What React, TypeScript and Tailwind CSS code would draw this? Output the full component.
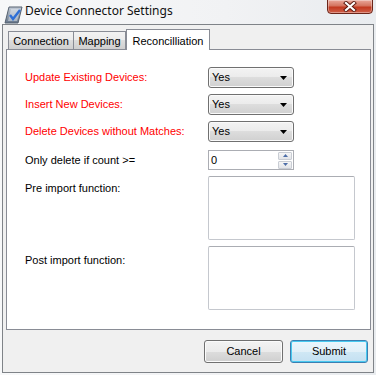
import React from "react";

function Combo() {
  return (
    <div className="w-[86px] h-[21px] rounded-[3px] border border-[#707070] bg-[linear-gradient(#f3f3f3,#ebebeb_50%,#dddddd_50%,#d0d0d0)] flex items-center pl-[3px] pr-[6px] text-[11px] text-black shadow-[inset_0_0_0_1px_#fafafa]">
      <span>Yes</span>
      <svg className="ml-auto" width="7" height="4" viewBox="0 0 7 4">
        <path d="M0 0H7L3.5 4Z" fill="#000" />
      </svg>
    </div>
  );
}

function Numeric() {
  return (
    <div className="w-[86px] h-[20px] border border-[#abadb3] bg-white flex items-center pl-[2px] pr-[1px] text-[11px]">
      <span>0</span>
      <div className="ml-auto flex flex-col gap-[1px]">
        <div className="w-[14px] h-[8px] border border-[#c9cdd4] rounded-[1px] bg-[linear-gradient(#f6f6f6,#e2e4e8)] flex items-center justify-center">
          <svg width="5" height="3" viewBox="0 0 5 3">
            <path d="M0 3H5L2.5 0Z" fill="#4d6ea8" />
          </svg>
        </div>
        <div className="w-[14px] h-[8px] border border-[#c9cdd4] rounded-[1px] bg-[linear-gradient(#f6f6f6,#e2e4e8)] flex items-center justify-center">
          <svg width="5" height="3" viewBox="0 0 5 3">
            <path d="M0 0H5L2.5 3Z" fill="#4d6ea8" />
          </svg>
        </div>
      </div>
    </div>
  );
}

function TextArea() {
  return (
    <div className="w-[147px] h-[64px] rounded-[2px] border border-[#c5c8ce] border-t-[#abadb3] bg-white" />
  );
}

export default function App() {
  return (
    <div className="w-[376px] h-[375px] overflow-hidden bg-[linear-gradient(to_right,#f7f8f9,#f1f2f4_60%,#e9ecef)] font-['Liberation_Sans',Arial,sans-serif] text-black">
      {/* Title bar */}
      <div className="h-[24px] flex items-start">
        <svg className="ml-[4px] mt-[6px]" width="19" height="18" viewBox="0 0 19 18">
          <defs>
            <linearGradient id="g1" x1="0" y1="0" x2="0" y2="1">
              <stop offset="0" stopColor="#c3ccd8" />
              <stop offset="1" stopColor="#66768a" />
            </linearGradient>
          </defs>
          <path d="M5 1H18L14 17H1Z" fill="url(#g1)" stroke="#55616f" strokeWidth="1" />
          <path d="M7 3H16L13 15H4Z" fill="#e6ecf2" opacity="0.5" />
          <path d="M6 9L9 13L16 4" fill="none" stroke="#2e6fd6" strokeWidth="2.4" />
        </svg>
        <span className="ml-[2px] mt-[3px] text-[12px] leading-[16px] font-['Noto_Sans',sans-serif] text-[#111]">
          Device Connector Settings
        </span>
        <div className="ml-auto mr-[3px] w-[46px] h-[15px] -mt-px rounded-b-[4px] border border-[#6b2519] bg-[linear-gradient(#e9a89a,#d4735e_45%,#c2391f_55%,#d0604a)] flex items-center justify-center shadow-[inset_0_0_0_1px_rgba(255,255,255,0.35)]">
          <svg width="14" height="11" viewBox="0 0 14 11">
            <path d="M3 2L11 9M11 2L3 9" stroke="#5a1a10" strokeWidth="4" strokeLinecap="square" />
            <path d="M3 2L11 9M11 2L3 9" stroke="#ffffff" strokeWidth="2.2" strokeLinecap="square" />
          </svg>
        </div>
      </div>

      {/* Client area */}
      <div className="ml-[2px] w-[372px] h-[349px] border border-[#7f8388] bg-[#f0f0f0] flex flex-col">
        {/* Tab strip */}
        <div className="mt-[4px] ml-[5px] h-[20px] flex items-end text-[11px]">
          <div className="w-[66px] h-[18px] border border-b-0 border-[#898c95] bg-[linear-gradient(#f2f2f2,#ebebeb_50%,#dddddd_50%,#cfcfcf)] flex items-center justify-center pt-[1px]">
            Connection
          </div>
          <div className="w-[52px] h-[18px] border border-l-0 border-b-0 border-[#898c95] bg-[linear-gradient(#f2f2f2,#ebebeb_50%,#dddddd_50%,#cfcfcf)] flex items-center justify-center pt-[1px]">
            Mapping
          </div>
          <div className="relative z-10 w-[84px] h-[21px] -mb-px border border-b-0 border-[#898c95] bg-white flex items-start justify-center pt-[3px]">
            Reconcilliation
          </div>
        </div>

        {/* Tab panel */}
        <div className="ml-[3px] w-[365px] h-[281px] border border-[#898c95] bg-white pt-[17px] pl-[18px] text-[11px]">
          <div className="grid grid-cols-[183px_auto] gap-y-[6px]">
            <div className="h-[21px] flex items-center text-[#ff0000]">Update Existing Devices:</div>
            <Combo />
            <div className="h-[21px] flex items-center text-[#ff0000]">Insert New Devices:</div>
            <Combo />
            <div className="h-[21px] flex items-center text-[#ff0000]">Delete Devices without Matches:</div>
            <Combo />
            <div className="h-[20px] mt-[2px] flex items-center">Only delete if count &gt;=</div>
            <div className="mt-[2px]">
              <Numeric />
            </div>
            <div className="pt-[4px]">Pre import function:</div>
            <TextArea />
            <div className="pt-[6px]">Post import function:</div>
            <TextArea />
          </div>
        </div>

        {/* Buttons */}
        <div className="mt-[10px] mr-[5px] flex justify-end gap-[7px] text-[11px]">
          <div className="w-[79px] h-[23px] rounded-[3px] border border-[#707070] bg-[linear-gradient(#f3f3f3,#ebebeb_50%,#dddddd_50%,#cfcfcf)] shadow-[inset_0_0_0_1px_#fbfbfb] flex items-center justify-center">
            Cancel
          </div>
          <div className="w-[78px] h-[23px] rounded-[3px] border border-[#3c7fb1] bg-[linear-gradient(#eaf6fd,#e2f0f8_50%,#d0e8f5_50%,#c4e0f1)] shadow-[inset_0_0_0_1px_#48c9f0] flex items-center justify-center">
            Submit
          </div>
        </div>
      </div>
    </div>
  );
}
